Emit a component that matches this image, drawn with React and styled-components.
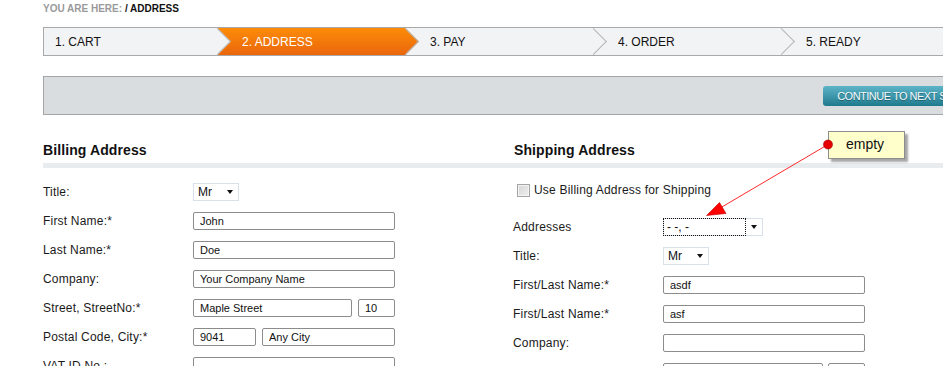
import React from "react";
import styled, { createGlobalStyle } from "styled-components";

const GlobalStyle = createGlobalStyle`
    html, body {
        margin: 0;
        padding: 0;
        background: #fff;
        overflow: hidden;
    }
    body {
        font-family: "Liberation Sans", Arial, sans-serif;
        color: #1a1a1a;
    }
`;

const Root = styled.div`
    position: relative;
    width: 943px;
    height: 366px;
    overflow: hidden;
`;

const Page = styled.div`
    width: 960px;
    margin-left: 43px;
`;

const Breadcrumb = styled.div`
    padding-top: 2px;
    font-size: 10px;
    line-height: 14px;
    font-weight: bold;
    color: #9a9a9a;

    strong {
        color: #111;
    }
`;

const Stepper = styled.div`
    position: relative;
    z-index: 0;
    display: flex;
    height: 29px;
    box-sizing: border-box;
    margin-top: 11px;
    border: 1px solid #a9a9a9;
    background: #f2f3f5;
`;

const Step = styled.div`
    position: relative;
    flex: 0 0 188px;
    display: flex;
    align-items: center;
    padding-left: 11px;
    box-sizing: border-box;
    font-size: 12px;
    color: ${(p) => (p.$active ? "#fff" : "#111")};

    &:first-child {
        flex-basis: 187px;
    }

    &::before {
        content: "";
        display: ${(p) => (p.$active ? "block" : "none")};
        position: absolute;
        top: 0;
        bottom: 0;
        left: -13.5px;
        right: 0;
        z-index: 0;
        background: linear-gradient(#fd8c08, #ea660c);
        clip-path: polygon(
            0 0,
            calc(100% - 13.5px) 0,
            100% 50%,
            calc(100% - 13.5px) 100%,
            0 100%,
            13.5px 50%
        );
    }

    &::after {
        content: "";
        position: absolute;
        top: 4px;
        right: 4px;
        width: 19px;
        height: 19px;
        box-sizing: border-box;
        border-top: 1px solid #b5b5b5;
        border-right: 1px solid #b5b5b5;
        transform: rotate(45deg);
        z-index: 2;
    }

    &:last-child {
        flex: 1;
    }
    &:last-child::after {
        display: none;
    }
`;

const StepText = styled.span`
    position: relative;
    z-index: 1;
`;

const ActionBar = styled.div`
    display: flex;
    justify-content: flex-end;
    align-items: center;
    height: 39px;
    box-sizing: border-box;
    margin-top: 20px;
    padding-right: 22px;
    border: 1px solid #a5a5a5;
    background: #d9dde0;
`;

const NextButton = styled.button`
    height: 20px;
    padding: 0 14px;
    border: none;
    border-radius: 3px;
    background: linear-gradient(#5db4c8, #1f7a8d);
    color: #f4fbfd;
    font-family: "Liberation Sans", Arial, sans-serif;
    font-size: 11px;
    letter-spacing: -0.5px;
    text-transform: uppercase;
    text-shadow: 0 1px 0 rgba(0, 0, 0, 0.35);
`;

const Columns = styled.div`
    display: flex;
    margin-top: 26px;
`;

const Column = styled.div`
    flex: 0 0 ${(p) => p.$width}px;
`;

const Heading = styled.h2`
    margin: 0;
    padding: 0 0 4px ${(p) => p.$indent || 0}px;
    font-size: 14px;
    line-height: 18px;
    font-weight: bold;
    letter-spacing: 0.1px;
    color: #111;
    border-bottom: 5px solid #e9ecef;
`;

const Form = styled.div`
    display: flex;
    flex-direction: column;
    gap: 11px;
    padding-top: ${(p) => p.$top}px;
`;

const Row = styled.div`
    display: grid;
    grid-template-columns: 150px auto;
    align-items: center;
    height: 18px;
`;

const Label = styled.span`
    font-size: 12px;
    letter-spacing: 0.2px;
    color: #1a1a1a;
`;

const Controls = styled.div`
    display: flex;
    gap: ${(p) => p.$gap || 6}px;
`;

const TextInput = styled.input`
    width: ${(p) => p.$w}px;
    height: 18px;
    box-sizing: border-box;
    margin: 0;
    padding: 0 6px;
    border: 1px solid #8c8c8c;
    border-radius: 2px;
    background: #fff;
    font-family: "Liberation Sans", Arial, sans-serif;
    font-size: 11px;
    color: #111;
    outline: none;
`;

const Select = styled.div`
    display: flex;
    align-items: center;
    justify-content: space-between;
    width: ${(p) => p.$w}px;
    height: 18px;
    box-sizing: border-box;
    padding-right: 5px;
    border: 1px solid #d8e0ea;
    background: #fff;
    font-size: 12px;
    color: #111;
`;

const SelectValue = styled.span`
    flex: ${(p) => (p.$focus ? "0 0 83px" : "1")};
    align-self: stretch;
    display: flex;
    align-items: center;
    box-sizing: border-box;
    margin: ${(p) => (p.$focus ? "-1px 0 -1px -1px" : "0")};
    padding-left: ${(p) => (p.$focus ? 3 : 4)}px;
    border: ${(p) => (p.$focus ? "1px dotted #111" : "none")};
`;

const Caret = styled.span`
    width: 0;
    height: 0;
    border-left: 3px solid transparent;
    border-right: 3px solid transparent;
    border-top: 4px solid #111;
`;

const CheckRow = styled.label`
    display: flex;
    align-items: center;
    gap: 4px;
    height: 18px;
    padding-left: 4px;
    margin-bottom: 8px;
    font-size: 12px;
    letter-spacing: 0.2px;
    color: #1a1a1a;
`;

const CheckBox = styled.span`
    width: 13px;
    height: 13px;
    box-sizing: border-box;
    border: 1px solid #a4a4a4;
    background: linear-gradient(135deg, #d6d6d6, #efefef);
    box-shadow: inset 0 0 0 1px #f3f3f3;
`;

const Note = styled.div`
    position: absolute;
    left: 828px;
    top: 131px;
    width: 77px;
    height: 28px;
    box-sizing: border-box;
    padding-left: 17px;
    border: 1px solid #8e8e8e;
    background: #ffffcc;
    box-shadow: 3px 3px 2px rgba(0, 0, 0, 0.35);
    font-size: 14px;
    line-height: 25px;
    color: #111;
`;

const Pointer = styled.svg`
    position: absolute;
    left: 0;
    top: 0;
    pointer-events: none;
`;

const steps = ["1. CART", "2. ADDRESS", "3. PAY", "4. ORDER", "5. READY"];

function Field({ label, children, gap }) {
    return (
        <Row>
            <Label>{label}</Label>
            <Controls $gap={gap}>{children}</Controls>
        </Row>
    );
}

function TitleSelect() {
    return (
        <Select $w={46}>
            <SelectValue>Mr</SelectValue>
            <Caret />
        </Select>
    );
}

function App() {
    return (
        <Root>
            <GlobalStyle />
            <Page>
                <Breadcrumb>
                    YOU ARE HERE: <strong>/ ADDRESS</strong>
                </Breadcrumb>

                <Stepper>
                    {steps.map((s, i) => (
                        <Step key={s} $active={i === 1}>
                            <StepText>{s}</StepText>
                        </Step>
                    ))}
                </Stepper>

                <ActionBar>
                    <NextButton>Continue to next step</NextButton>
                </ActionBar>

                <Columns>
                    <Column $width={470}>
                        <Heading>Billing Address</Heading>
                        <Form $top={15}>
                            <Field label="Title:">
                                <TitleSelect />
                            </Field>
                            <Field label="First Name:*">
                                <TextInput $w={202} defaultValue="John" />
                            </Field>
                            <Field label="Last Name:*">
                                <TextInput $w={202} defaultValue="Doe" />
                            </Field>
                            <Field label="Company:">
                                <TextInput $w={202} defaultValue="Your Company Name" />
                            </Field>
                            <Field label="Street, StreetNo:*">
                                <TextInput $w={159} defaultValue="Maple Street" />
                                <TextInput $w={37} defaultValue="10" />
                            </Field>
                            <Field label="Postal Code, City:*">
                                <TextInput $w={63} defaultValue="9041" />
                                <TextInput $w={133} defaultValue="Any City" />
                            </Field>
                            <Field label="VAT ID No.:">
                                <TextInput $w={202} defaultValue="" />
                            </Field>
                        </Form>
                    </Column>

                    <Column $width={490}>
                        <Heading $indent={1}>Shipping Address</Heading>
                        <Form $top={13}>
                            <CheckRow>
                                <CheckBox />
                                Use Billing Address for Shipping
                            </CheckRow>
                            <Field label="Addresses">
                                <Select $w={100}>
                                    <SelectValue $focus>- -, -</SelectValue>
                                    <Caret />
                                </Select>
                            </Field>
                            <Field label="Title:">
                                <TitleSelect />
                            </Field>
                            <Field label="First/Last Name:*">
                                <TextInput $w={202} defaultValue="asdf" />
                            </Field>
                            <Field label="First/Last Name:*">
                                <TextInput $w={202} defaultValue="asf" />
                            </Field>
                            <Field label="Company:">
                                <TextInput $w={202} defaultValue="" />
                            </Field>
                            <Field label="Street, StreetNo:*" gap={5}>
                                <TextInput $w={160} defaultValue="" />
                                <TextInput $w={37} defaultValue="" />
                            </Field>
                        </Form>
                    </Column>
                </Columns>
            </Page>

            <Note>empty</Note>
            <Pointer width="943" height="366" viewBox="0 0 943 366">
                <line x1="828" y1="144.5" x2="721" y2="207.5" stroke="#ff2a2a" strokeWidth="1" />
                <polygon
                    points="706.5,215.5 719.5,202.5 726,213.5"
                    fill="#ff0000"
                    stroke="#b80000"
                    strokeWidth="0.6"
                />
                <circle cx="828" cy="144.5" r="4.5" fill="#e60000" stroke="#9a0000" strokeWidth="0.6" />
            </Pointer>
        </Root>
    );
}

export default App;
